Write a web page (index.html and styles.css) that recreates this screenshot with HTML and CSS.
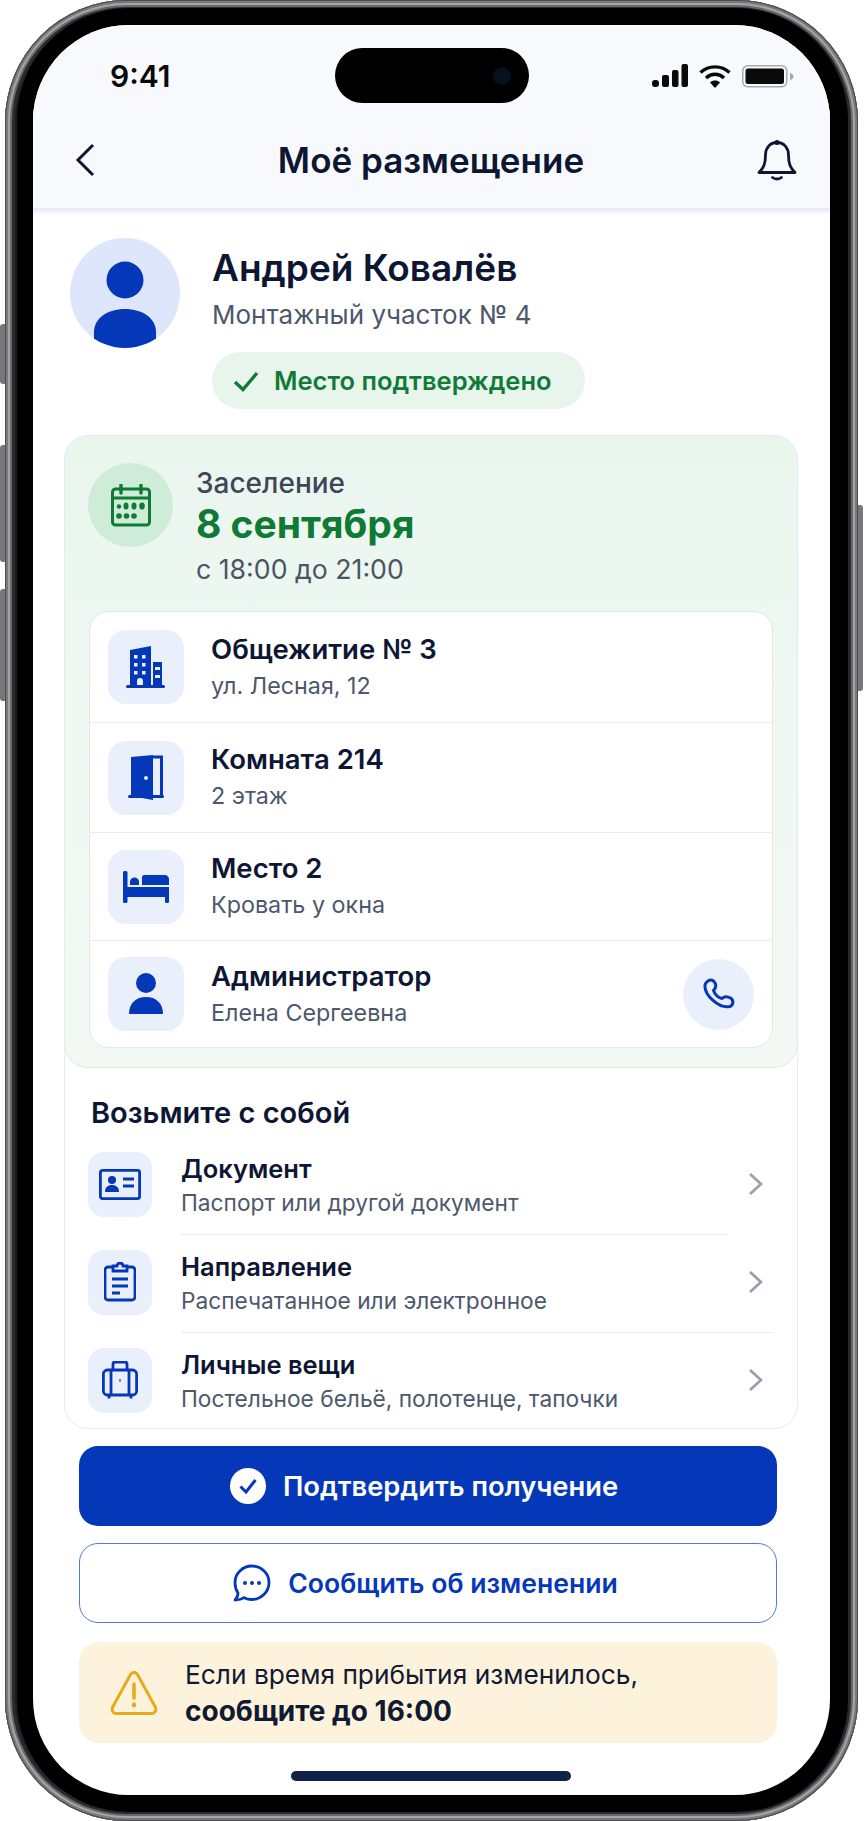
FILE: index.html
```html
<!DOCTYPE html>
<html lang="ru">
<head>
    <meta charset="UTF-8">
    <meta name="viewport" content="width=device-width, initial-scale=1.0">
    <title>Моё размещение</title>
    <link rel="stylesheet" href="styles.css">
</head>
<body>
<div class="phone">
    <i class="side-btn btn-mute"></i>
    <i class="side-btn btn-up"></i>
    <i class="side-btn btn-down"></i>
    <i class="side-btn btn-power"></i>

    <div class="bezel">
        <div class="screen">
            <header class="top">
                <div class="status">
                    <span class="time">9:41</span>
                    <div class="island"><i class="lens"></i></div>
                    <div class="status-icons">
                        <svg width="36" height="24" viewBox="0 0 36 24"><rect x="0" y="16" width="7" height="7" rx="3" fill="#0a0a0a"/><rect x="10" y="11" width="7" height="12" rx="2" fill="#0a0a0a"/><rect x="20" y="6" width="6.500" height="17" rx="2" fill="#0a0a0a"/><rect x="29.500" y="0" width="6.500" height="23" rx="2" fill="#0a0a0a"/></svg>
                        <svg width="32" height="24" viewBox="0 0 32 24"><path d="M1.500 8.500C9.500 1 22.500 1 30.500 8.500" fill="none" stroke="#0a0a0a" stroke-width="3.400"/><path d="M7 14C12.500 9 19.500 9 25 14" fill="none" stroke="#0a0a0a" stroke-width="3.400"/><path d="M11 18.500c3-2.600 7-2.600 10 0L16 24z" fill="#0a0a0a"/></svg>
                        <svg width="52" height="24" viewBox="0 0 52 24"><rect x="0.750" y="1.750" width="44" height="21" rx="5" fill="none" stroke="#a9a9ab" stroke-width="1.500"/><rect x="3.500" y="4.500" width="38.500" height="15.500" rx="2.500" fill="#0a0a0a"/><path d="M48 9c2 .5 3.500 2 3.500 3.500S50 15.500 48 16z" fill="#a9a9ab"/></svg>
                    </div>
                </div>
                <div class="nav">
                    <svg class="nav-back" width="20" height="34" viewBox="0 0 20 34"><path d="M18 2 3 17l15 15" fill="none" stroke="#0d1633" stroke-width="3"/></svg>
                    <h1 class="nav-title">Моё размещение</h1>
                    <svg class="nav-bell" width="40" height="42" viewBox="0 0 40 42"><path d="M20 3.500c-7 0-11.500 5.500-11.500 12.500 0 9-2 13-6.500 17.500h36c-4.500-4.500-6.500-8.500-6.500-17.500C31.500 9 27 3.500 20 3.500z" fill="none" stroke="#0d1633" stroke-width="2.800" stroke-linejoin="round"/><circle cx="20" cy="3.500" r="2.500" fill="#0d1633"/><path d="M15.500 38.500c2.500 2 6.500 2 9 0" fill="none" stroke="#0d1633" stroke-width="2.800" stroke-linecap="round"/></svg>
                </div>
            </header>

            <section class="profile">
                <div class="avatar">
                    <svg width="110" height="110" viewBox="0 0 110 110"><circle cx="55" cy="42" r="18.500" fill="#0538b8"/><path d="M24 115V94C24 80 38 71 55 71s31 9 31 23v21z" fill="#0538b8"/></svg>
                </div>
                <div class="profile-info">
                    <div class="profile-name">Андрей Ковалёв</div>
                    <div class="profile-job">Монтажный участок № 4</div>
                    <div class="pill">
                        <svg width="26" height="22" viewBox="0 0 26 22"><path d="M2 12l8 7.500L24 3" fill="none" stroke="#107a38" stroke-width="3.400"/></svg>
                        <span>Место подтверждено</span>
                    </div>
                </div>
            </section>

            <section class="panel">
                <div class="stay">
                    <div class="stay-head">
                        <div class="stay-badge">
                            <svg width="40" height="43" viewBox="0 0 40 43"><rect x="1.500" y="5" width="37" height="36" rx="3" fill="none" stroke="#0f7a33" stroke-width="3"/><path d="M1.500 14h37" stroke="#0f7a33" stroke-width="3"/><path d="M10 1v8M30 1v8" stroke="#0f7a33" stroke-width="3.400" stroke-linecap="round"/><g fill="#0f7a33"><circle cx="8" cy="22.500" r="2.200"/><ellipse cx="15" cy="22" rx="2.500" ry="3.500"/><ellipse cx="23" cy="22" rx="2.500" ry="3.500"/><ellipse cx="31" cy="22" rx="2.800" ry="3.500"/><circle cx="8" cy="32" r="2.800"/><circle cx="15.500" cy="32" r="2.800"/><circle cx="23" cy="32" r="2.800"/></g></svg>
                        </div>
                        <div class="stay-when">
                            <div class="stay-label">Заселение</div>
                            <div class="stay-date">8 сентября</div>
                            <div class="stay-time">с 18:00 до 21:00</div>
                        </div>
                    </div>

                    <div class="stay-list">
                        <div class="stay-row">
                            <div class="stay-icon">
                                <svg width="40" height="43" viewBox="0 0 40 43"><path d="M4 4 25 0v39H4z" fill="#0538b8"/><path d="M27 16h9v23h-9z" fill="#0538b8"/><rect x="0" y="39" width="39" height="3" rx="1.500" fill="#0538b8"/><g fill="#e9effb"><rect x="8" y="9" width="3.500" height="3.500"/><rect x="16" y="9" width="3.500" height="3.500"/><rect x="8" y="17" width="3.500" height="3.500"/><rect x="16" y="17" width="3.500" height="3.500"/><rect x="8" y="25" width="3.500" height="3.500"/><rect x="16" y="25" width="3.500" height="3.500"/><path d="M11 39v-4a3 3 0 0 1 6 0v4z"/><rect x="29" y="21" width="5" height="3"/><rect x="29" y="29" width="5" height="3"/></g></svg>
                            </div>
                            <div class="stay-text">
                                <div class="row-title">Общежитие № 3</div>
                                <div class="row-sub">ул. Лесная, 12</div>
                            </div>
                        </div>
                        <div class="stay-row">
                            <div class="stay-icon">
                                <svg width="37" height="45" viewBox="0 0 37 45"><path d="M3 2 25 0v45L3 41z" fill="#0538b8"/><path d="M25 2h8.500v39" fill="none" stroke="#0538b8" stroke-width="3"/><rect x="0" y="40" width="36" height="3" rx="1.500" fill="#0538b8"/><circle cx="18" cy="23" r="2" fill="#e9effb"/></svg>
                            </div>
                            <div class="stay-text">
                                <div class="row-title">Комната 214</div>
                                <div class="row-sub">2 этаж</div>
                            </div>
                        </div>
                        <div class="stay-row">
                            <div class="stay-icon">
                                <svg width="46" height="32" viewBox="0 0 46 32"><rect x="0" y="0" width="4.500" height="32" rx="1.500" fill="#0538b8"/><path d="M7 11c0-6 9-6 9 0v3H7z" fill="#0538b8"/><path d="M19 6c0-1 1-2 2-2h21c2 0 4 2 4 4v6H19z" fill="#0538b8"/><path d="M4 16h42v10H4z" fill="#0538b8"/><rect x="42" y="24" width="4" height="8" rx="1.500" fill="#0538b8"/></svg>
                            </div>
                            <div class="stay-text">
                                <div class="row-title">Место 2</div>
                                <div class="row-sub">Кровать у окна</div>
                            </div>
                        </div>
                        <div class="stay-row">
                            <div class="stay-icon">
                                <svg width="36" height="42" viewBox="0 0 36 42"><circle cx="18" cy="10" r="10" fill="#0538b8"/><path d="M1 41c0-11 7-17 17-17s17 6 17 17z" fill="#0538b8"/></svg>
                            </div>
                            <div class="stay-text">
                                <div class="row-title">Администратор</div>
                                <div class="row-sub">Елена Сергеевна</div>
                            </div>
                            <div class="call-btn">
                                <svg width="32" height="32" viewBox="0 0 32 32"><path d="M5 3C8 1 11 2 12.500 6c1 3-.5 5-2 6.500 1.500 4 4.500 7 8.500 8 2-2 5-2.500 8.500-.5 3.500 2 3 7-.5 8.500C16 31 1 17 2 7c.2-2 1.500-3 3-4z" fill="none" stroke="#0538b8" stroke-width="3" stroke-linejoin="round"/></svg>
                            </div>
                        </div>
                    </div>
                </div>

                <div class="needs">
                    <h2 class="needs-title">Возьмите с собой</h2>
                    <div class="need-row">
                        <div class="need-icon">
                            <svg width="42" height="31" viewBox="0 0 42 31"><rect x="1.400" y="1.400" width="39.200" height="28.200" rx="2" fill="none" stroke="#0538b8" stroke-width="2.800"/><circle cx="13" cy="11" r="4" fill="#0538b8"/><path d="M6 23c0-5 3-7 7-7s7 2 7 7z" fill="#0538b8"/><path d="M24 10h11M24 17h11" stroke="#0538b8" stroke-width="2.800"/></svg>
                        </div>
                        <div class="need-text">
                            <div class="need-name">Документ</div>
                            <div class="need-sub">Паспорт или другой документ</div>
                        </div>
                        <svg class="chev" width="15" height="24" viewBox="0 0 15 24"><path d="M2 2l11 10L2 22" fill="none" stroke="#98a0ac" stroke-width="2.800"/></svg>
                    </div>
                    <div class="need-row">
                        <div class="need-icon">
                            <svg width="32" height="40" viewBox="0 0 32 40"><path d="M9 5H4a3 3 0 0 0-3 3v27a3 3 0 0 0 3 3h24a3 3 0 0 0 3-3V8a3 3 0 0 0-3-3h-5" fill="none" stroke="#0538b8" stroke-width="2.800"/><path d="M9 4h4c0-4 6-4 6 0h4v5H9z" fill="none" stroke="#0538b8" stroke-width="2.800"/><path d="M8 17h16M8 24h16M8 31h8" stroke="#0538b8" stroke-width="2.800"/></svg>
                        </div>
                        <div class="need-text">
                            <div class="need-name">Направление</div>
                            <div class="need-sub">Распечатанное или электронное</div>
                        </div>
                        <svg class="chev" width="15" height="24" viewBox="0 0 15 24"><path d="M2 2l11 10L2 22" fill="none" stroke="#98a0ac" stroke-width="2.800"/></svg>
                    </div>
                    <div class="need-row">
                        <div class="need-icon">
                            <svg width="36" height="38" viewBox="0 0 36 38"><rect x="1.400" y="9" width="33.200" height="25" rx="4" fill="none" stroke="#0538b8" stroke-width="2.800"/><path d="M11 9V3a2 2 0 0 1 2-2h10a2 2 0 0 1 2 2v6M9 9v25M27 9v25M7 35v2.500M29 35v2.500" fill="none" stroke="#0538b8" stroke-width="2.800"/><rect x="17" y="18" width="2" height="3" fill="#6d8bd6"/></svg>
                        </div>
                        <div class="need-text">
                            <div class="need-name">Личные вещи</div>
                            <div class="need-sub">Постельное бельё, полотенце, тапочки</div>
                        </div>
                        <svg class="chev" width="15" height="24" viewBox="0 0 15 24"><path d="M2 2l11 10L2 22" fill="none" stroke="#98a0ac" stroke-width="2.800"/></svg>
                    </div>
                </div>
            </section>

            <section class="actions">
                <button class="btn btn-primary">
                    <svg width="36" height="36" viewBox="0 0 36 36"><circle cx="18" cy="18" r="18" fill="#fff"/><path d="M10.500 18.500l5.500 5.500 9.500-12" fill="none" stroke="#0538b8" stroke-width="3"/></svg>
                    <span>Подтвердить получение</span>
                </button>
                <button class="btn btn-ghost">
                    <svg width="38" height="38" viewBox="0 0 38 38"><path d="M19 2c9 0 17 7 17 16.500S28 35.500 19 35.500c-3 0-6-.5-8-2-2 1.500-5 2.500-9 2.500 2-2 3-4.500 3-7-2-3-3-6.500-3-10.500C2 9 10 2 19 2z" fill="none" stroke="#0538b8" stroke-width="2.800" stroke-linejoin="round"/><circle cx="12" cy="19" r="2" fill="#0538b8"/><circle cx="19" cy="19" r="2" fill="#0538b8"/><circle cx="26" cy="19" r="2" fill="#0538b8"/></svg>
                    <span>Сообщить об изменении</span>
                </button>
                <div class="notice">
                    <svg width="48" height="46" viewBox="0 0 48 46"><path d="M24 2.500c-1.500 0-2.800.8-3.600 2.300L2.700 37c-1.500 3 .3 6.500 3.500 6.500h35.600c3.200 0 5-3.500 3.500-6.500L27.600 4.800C26.800 3.300 25.500 2.500 24 2.500z" fill="none" stroke="#e9a91c" stroke-width="3" stroke-linejoin="round"/><path d="M24 14v14" stroke="#e9a91c" stroke-width="3.600" stroke-linecap="round"/><circle cx="24" cy="35" r="2.400" fill="#e9a91c"/></svg>
                    <p class="notice-text">Если время прибытия изменилось,<br><b>сообщите до 16:00</b></p>
                </div>
            </section>

            <div class="home-bar"></div>
        </div>
    </div>
</div>
</body>
</html>
```

FILE: styles.css
```css
* {
    box-sizing: border-box;
}

html, body {
    margin: 0;
    height: 1821px;
    overflow: hidden;
    background: #fff;
    font-family: "Inter", "Liberation Sans", sans-serif;
    color: #0d1633;
}

/* device frame */
.phone {
    position: relative;
    width: 853px;
    height: 1821px;
    margin-left: 5px;
    padding: 8px 10px 9px 12px;
    border-radius: 122px;
    background: #1c1c1e;
    box-shadow: inset 0 0 0 1px #4c4c4e, inset 0 0 0 3px #7a7a7c, inset 0 0 0 5px #a5a5a7, inset 0 0 0 7px #69696b, inset 0 0 0 10px #2a2a2c;
}

.side-btn {
    position: absolute;
    width: 5px;
    background: #77777a;
}

.btn-mute { left: -5px; top: 324px; height: 60px; border-radius: 3px 0 0 3px; }
.btn-up { left: -5px; top: 445px; height: 117px; border-radius: 3px 0 0 3px; }
.btn-down { left: -5px; top: 589px; height: 112px; border-radius: 3px 0 0 3px; }
.btn-power { right: -5px; top: 505px; height: 186px; border-radius: 0 3px 3px 0; }

.bezel {
    height: 100%;
    padding: 17px 18px 17px 16px;
    border-radius: 112px;
    background: #000;
}

.screen {
    display: flex;
    flex-direction: column;
    height: 100%;
    border-radius: 96px;
    overflow: hidden;
    background: #fff;
}

/* status bar and nav */
.top {
    height: 186px;
    flex-shrink: 0;
    background: #f8f9fc;
    border-bottom: 3px solid #e9ecf5;
    box-shadow: 0 2px 3px #eef0f6;
}

.status {
    display: grid;
    grid-template-columns: 1fr 194px 1fr;
    align-items: center;
    padding-top: 23px;
}

.time {
    padding-left: 77px;
    font-size: 30px;
    font-weight: 600;
    color: #0a0a0a;
}

.island {
    position: relative;
    height: 55px;
    border-radius: 28px;
    background: #000;
}

.lens {
    position: absolute;
    right: 18px;
    top: 19px;
    width: 18px;
    height: 18px;
    border-radius: 50%;
    background: #07101f;
}

.status-icons {
    display: flex;
    justify-content: flex-end;
    align-items: center;
    gap: 11px;
    padding-right: 36px;
}

.nav {
    display: flex;
    align-items: center;
    justify-content: space-between;
    height: 64px;
    margin-top: 25px;
    padding: 0 33px 0 42px;
}

.nav-title {
    margin: 0;
    padding-left: 10px;
    font-size: 35px;
    font-weight: 600;
}

/* profile */
.profile {
    display: flex;
    gap: 32px;
    padding: 27px 0 26px 37px;
}

.avatar {
    width: 110px;
    height: 110px;
    flex-shrink: 0;
    border-radius: 50%;
    overflow: hidden;
    background: #dde6fa;
}

.avatar svg {
    display: block;
}

.profile-info {
    padding-top: 9px;
}

.profile-name {
    font-size: 37px;
    line-height: 42px;
    font-weight: 600;
}

.profile-job {
    margin-top: 9px;
    font-size: 26px;
    line-height: 34px;
    color: #4d586c;
}

.pill {
    display: inline-flex;
    align-items: center;
    gap: 15px;
    height: 57px;
    margin-top: 20px;
    padding: 0 33px 0 21px;
    border-radius: 29px;
    background: #e8f5ec;
    font-size: 25.500px;
    font-weight: 600;
    color: #107a38;
}

/* big card */
.panel {
    flex-shrink: 0;
    height: 994px;
    margin: 0 32px 0 31px;
    border: 1px solid #e6e9ee;
    border-radius: 24px;
    overflow: hidden;
}

.stay {
    height: 633px;
    margin: -1px -1px 0;
    padding: 27px 24px 19px;
    border: 1px solid #dcebe1;
    border-radius: 24px;
    background: linear-gradient(180deg, #e9f6ee, #f0f8f3 50%, #f2f9f5);
}

.stay-head {
    display: flex;
    gap: 23px;
    margin: 0 0 25px -1px;
}

.stay-badge {
    display: flex;
    align-items: center;
    justify-content: center;
    width: 85px;
    height: 84px;
    border-radius: 50%;
    background: #cfecd8;
}

.stay-when {
    padding-top: 3px;
}

.stay-label {
    font-size: 28px;
    line-height: 34px;
    font-weight: 500;
    color: #3f4658;
}

.stay-date {
    margin-top: 1px;
    font-size: 39px;
    line-height: 46px;
    font-weight: 700;
    color: #0f7a33;
}

.stay-time {
    margin-top: 5px;
    font-size: 26.700px;
    line-height: 34px;
    color: #4b5565;
}

.stay-list {
    display: grid;
    grid-template-rows: 111px 110px 108px 106px;
    border: 1px solid #e1eae4;
    border-radius: 20px;
    background: #fff;
}

.stay-row {
    display: flex;
    align-items: center;
    gap: 27px;
    padding: 0 18px;
    border-bottom: 1px solid #e9ecf1;
}

.stay-row:last-child {
    border-bottom: 0;
}

.stay-icon {
    display: flex;
    align-items: center;
    justify-content: center;
    width: 76px;
    height: 74px;
    flex-shrink: 0;
    border-radius: 18px;
    background: #e9effb;
}

.stay-text {
    flex: 1;
}

.row-title {
    font-size: 27.500px;
    line-height: 36px;
    font-weight: 600;
}

.row-sub {
    margin-top: 1px;
    font-size: 23.300px;
    line-height: 36px;
    color: #4d586c;
}

.call-btn {
    display: flex;
    align-items: center;
    justify-content: center;
    width: 71px;
    height: 71px;
    flex-shrink: 0;
    border-radius: 50%;
    background: #e9effb;
}

/* what to bring */
.needs {
    padding: 27px 0 0 23px;
}

.needs-title {
    margin: 0 0 4px 3px;
    font-size: 29px;
    line-height: 36px;
    font-weight: 600;
}

.need-row {
    position: relative;
    display: flex;
    align-items: center;
    gap: 29px;
    height: 98px;
    padding-right: 34px;
}

.need-row::after {
    content: "";
    position: absolute;
    left: 93px;
    right: 24px;
    bottom: -2px;
    height: 1px;
    background: #eceef3;
}

.need-row:nth-of-type(1)::after {
    right: 70px;
}

.need-row:last-child::after {
    display: none;
}

.need-icon {
    display: flex;
    align-items: center;
    justify-content: center;
    width: 64px;
    height: 65px;
    flex-shrink: 0;
    border-radius: 16px;
    background: #e9effb;
}

.need-text {
    flex: 1;
    padding-top: 3px;
}

.need-name {
    font-size: 25.500px;
    line-height: 34px;
    font-weight: 600;
}

.need-sub {
    font-size: 22.700px;
    line-height: 34px;
    color: #4d586c;
}

/* bottom actions */
.actions {
    display: flex;
    flex-direction: column;
    margin: 17px 53px 0 46px;
}

.btn {
    display: flex;
    align-items: center;
    justify-content: center;
    gap: 17px;
    height: 80px;
    border-radius: 19px;
    font-family: inherit;
    font-weight: 600;
}

.btn-primary {
    padding-right: 14px;
    border: 0;
    background: #0538b8;
    color: #fff;
    font-size: 27.300px;
}

.btn-ghost {
    margin-top: 17px;
    padding-right: 11px;
    border: 1.500px solid #5579d6;
    background: #fff;
    color: #0538b8;
    font-size: 26.600px;
}

.notice {
    display: flex;
    align-items: center;
    gap: 27px;
    height: 101px;
    margin-top: 19px;
    padding: 0 31px;
    border-radius: 20px;
    background: #fdf3dc;
}

.notice-text {
    margin: 0;
    font-size: 26.300px;
    line-height: 37px;
    color: #111a33;
}

.notice-text b {
    font-size: 28px;
    font-weight: 700;
}

.home-bar {
    width: 280px;
    height: 10px;
    margin: 28px auto 0 258px;
    border-radius: 5px;
    background: #0f2347;
}
```
